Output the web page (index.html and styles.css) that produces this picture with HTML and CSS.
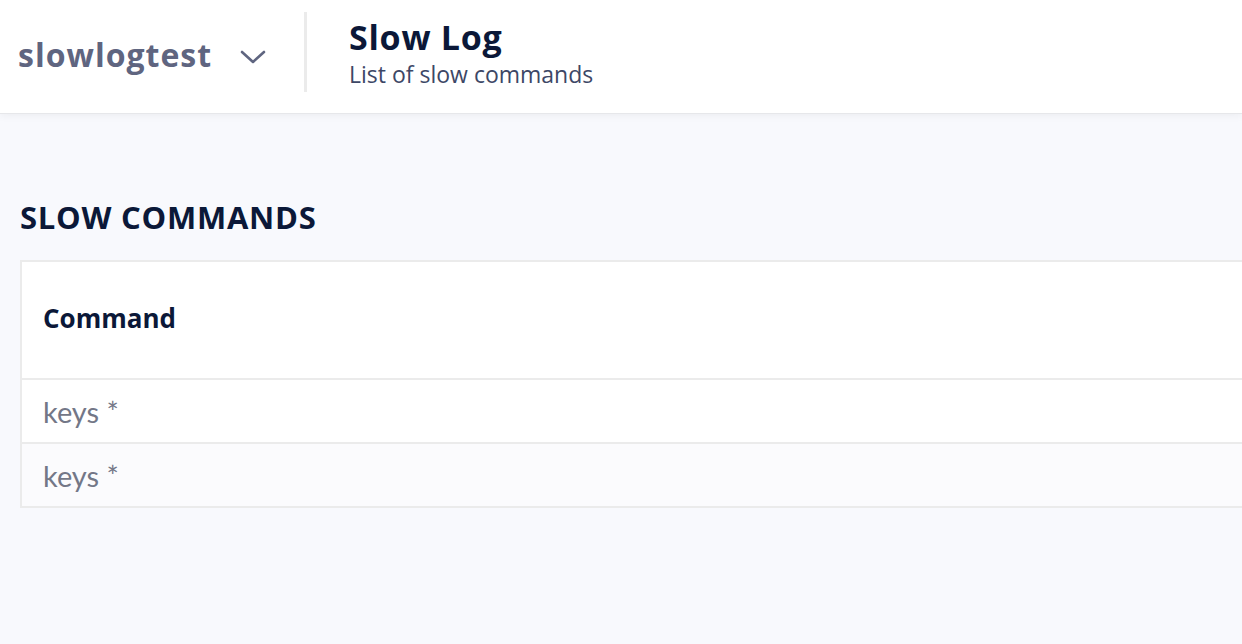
FILE: index.html
```html
<!DOCTYPE html>
<html>
<head>
<meta charset="utf-8">
<link rel="stylesheet" href="styles.css">
</head>
<body>
<header class="topbar">
  <div class="db-select">
    <span class="db-name">slowlogtest</span>
    <svg class="chevron" width="26" height="14" viewBox="0 0 26 14"><path d="M2 2 L13 12 L24 2" fill="none" stroke="#5f6580" stroke-width="2.6" stroke-linecap="round" stroke-linejoin="round"/></svg>
  </div>
  <div class="divider"></div>
  <div class="titles">
    <h1 class="page-title">Slow Log</h1>
    <p class="page-sub">List of slow commands</p>
  </div>
</header>
<main class="content">
  <h2 class="section-title">SLOW COMMANDS</h2>
  <div class="table">
    <div class="thead">Command</div>
    <div class="row">keys *</div>
    <div class="row alt">keys *</div>
  </div>
</main>
</body>
</html>
```
FILE: styles.css
```css
html, body { margin: 0; padding: 0; }
body {
  background: #f8f9fd;
  font-family: "Open Sans", sans-serif;
  width: 1242px;
  height: 644px;
  overflow: hidden;
}
.topbar {
  height: 114px;
  background: #fff;
  border-bottom: 1px solid #e6e7ea;
  box-shadow: 0 2px 8px rgba(0,0,0,0.05);
  display: flex;
  align-items: center;
  box-sizing: border-box;
}
.db-select {
  display: flex;
  align-items: center;
  padding-left: 18px;
  padding-bottom: 4px;
  width: 304px;
  box-sizing: border-box;
}
.db-name {
  font-family: "Open Sans", sans-serif;
  font-weight: 700;
  font-size: 32px;
  letter-spacing: 1px;
  color: #5f6580;
}
.chevron { margin-left: 28px; margin-top: 4px; }
.divider {
  width: 3px;
  height: 80px;
  background: #ebebeb;
  align-self: flex-start;
  margin-top: 12px;
}
.titles {
  margin-left: 42px;
  margin-top: -8px;
}
.page-title {
  margin: 0;
  font-family: "Open Sans", sans-serif;
  font-weight: 700;
  font-size: 34px;
  letter-spacing: 0.75px;
  line-height: 40px;
  color: #0b1838;
}
.page-sub {
  margin: 3px 0 0;
  font-family: "Open Sans", sans-serif;
  font-size: 23px;
  line-height: 28px;
  color: #3d4766;
}
.content {
  padding: 86px 0 0 20px;
}
.section-title {
  margin: 0;
  font-family: "Open Sans", sans-serif;
  font-weight: 700;
  font-size: 31px;
  letter-spacing: 0.75px;
  line-height: 34px;
  color: #0b1838;
}
.table {
  margin-top: 26px;
  background: #fff;
  border: 2px solid #ebebeb;
  border-right: none;
}
.thead {
  height: 118px;
  display: flex;
  align-items: center;
  padding-left: 21px;
  padding-bottom: 4px;
  box-sizing: border-box;
  font-family: "Open Sans", sans-serif;
  font-weight: 700;
  font-size: 26px;
  color: #0b1838;
  border-bottom: 2px solid #ebebeb;
}
.row {
  height: 62px;
  display: flex;
  align-items: center;
  padding-left: 21px;
  font-family: Lato, sans-serif;
  font-size: 29px;
  color: #737787;
}
.row + .row { border-top: 2px solid #ebebeb; }
.row.alt { background: #fbfbfd; }
```
